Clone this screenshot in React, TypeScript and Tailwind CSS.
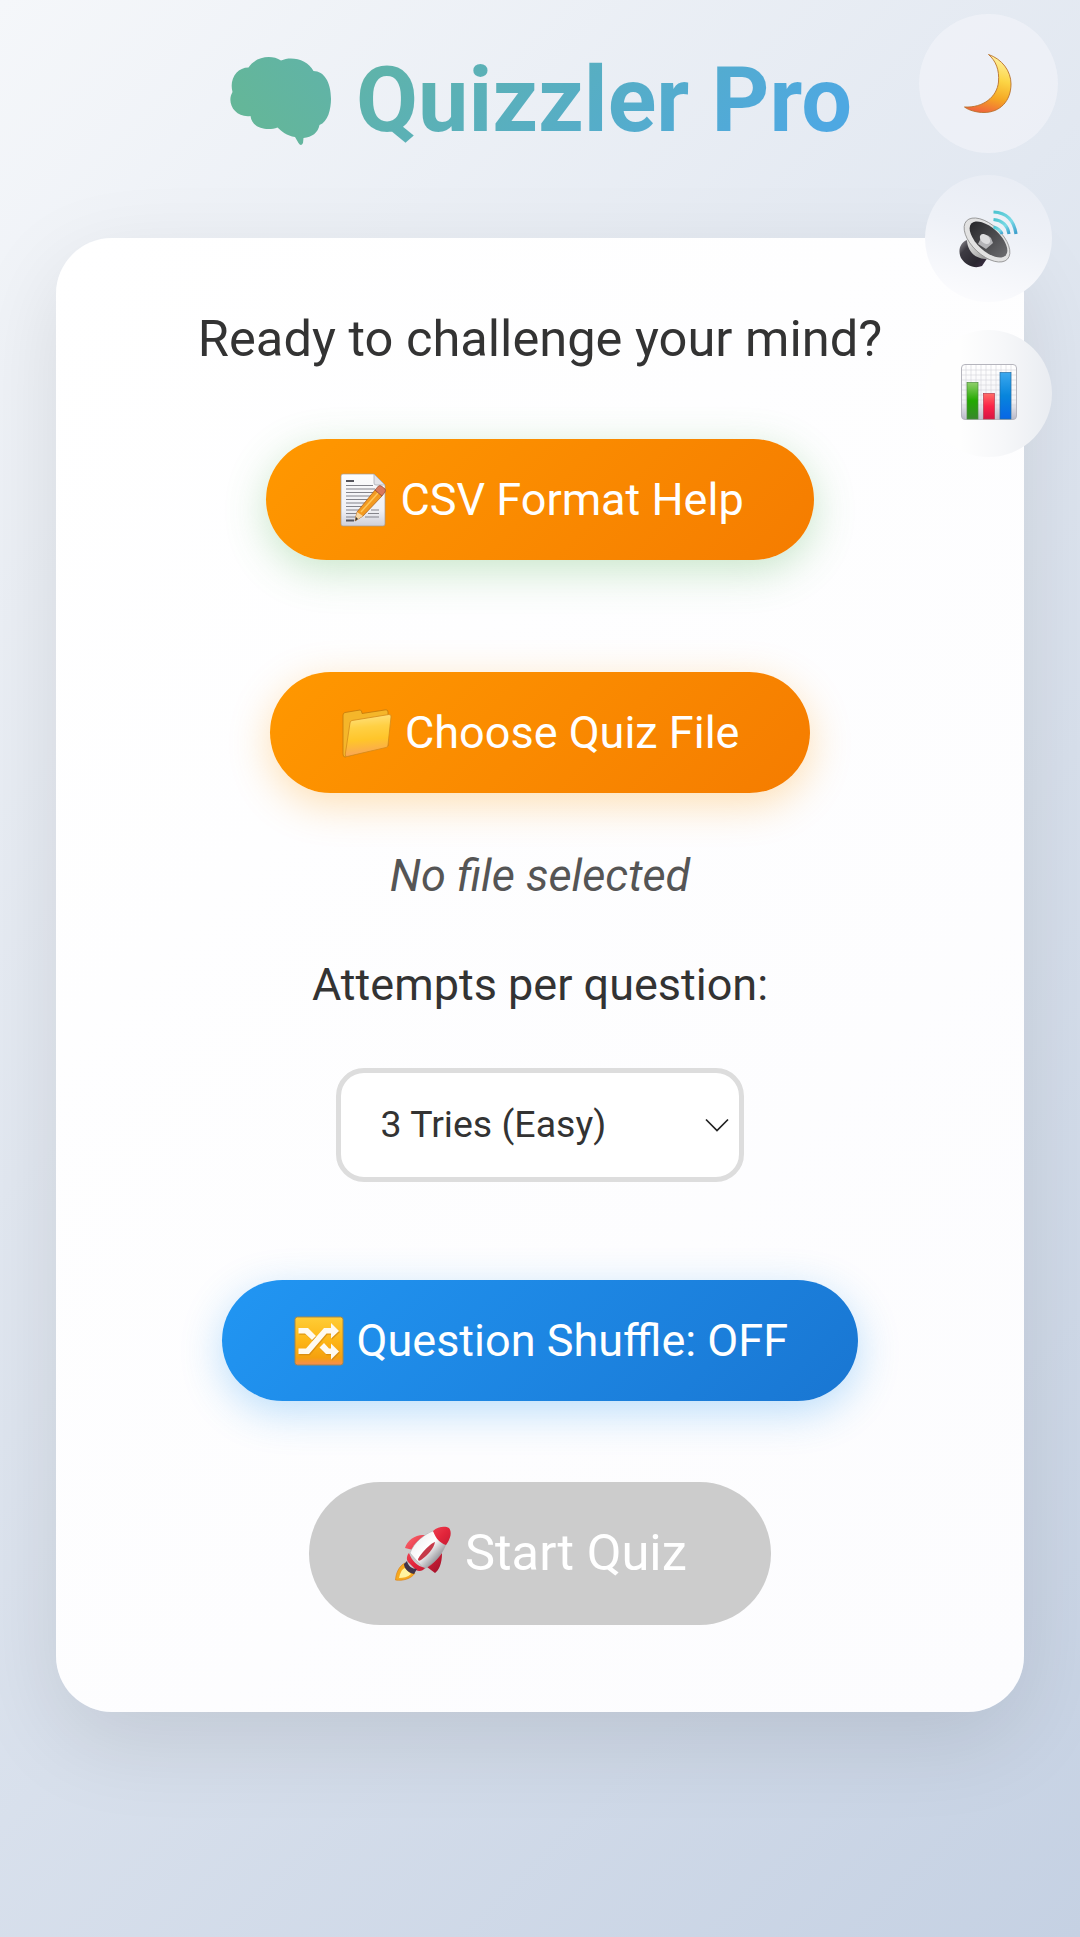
import React from 'react';

function Brain() {
  return (
    <svg className="h-[92px] w-[104px] shrink-0" viewBox="228 55 104 92">
      <defs>
        <linearGradient id="brain" gradientUnits="userSpaceOnUse" x1="235" y1="145" x2="345" y2="70">
          <stop stopColor="#65b795" />
          <stop offset="1" stopColor="#60b3a9" />
        </linearGradient>
      </defs>
      <path
        fill="url(#brain)"
        d="M248.500 67.500C255 57 271 54 281 60.500C292 55.500 308 60 313.500 71C324 71 331 82 331 99C331 109 328 122 319.500 125C318 133 312 137 303.500 138L303 143Q301 147 298.500 143L295 137C287 136 281 131 277.500 127.500C268 131 252 129 250.500 116C235 118 226 103 232.500 92C229 79 237 67.500 248.500 67.500Z"
      />
    </svg>
  );
}

function Moon() {
  return (
    <svg className="h-[64px] w-[52px]" viewBox="0 0 52 64">
      <defs>
        <linearGradient id="moon" x1=".6" y1="0" x2=".4" y2="1">
          <stop stopColor="#fff0a0" />
          <stop offset=".4" stopColor="#fcd545" />
          <stop offset=".72" stopColor="#f5a623" />
          <stop offset="1" stopColor="#f0663c" />
        </linearGradient>
      </defs>
      <path fill="url(#moon)" stroke="#b9702a" strokeWidth=".9" d="M25.500 2.500C39 7 48 19 48 32C48 49 37 60.500 21 60.500C14 60.500 6 58.500 1.500 55C20 56 34 45 35.500 30C36.500 18 33 9 25.500 2.500Z" />
    </svg>
  );
}

function Speaker() {
  return (
    <svg className="h-[64px] w-[64px]" viewBox="957 206 64 64">
      <defs>
        <linearGradient id="sp-base" x1="0" y1="0" x2="1" y2="1">
          <stop stopColor="#a09ea4" />
          <stop offset=".3" stopColor="#3d3b43" />
          <stop offset=".7" stopColor="#2b2831" />
          <stop offset="1" stopColor="#413049" />
        </linearGradient>
        <linearGradient id="sp-mid" x1="0" y1="0" x2="1" y2=".8">
          <stop stopColor="#fafafa" />
          <stop offset=".5" stopColor="#c4c4c4" />
          <stop offset="1" stopColor="#808080" />
        </linearGradient>
        <linearGradient id="sp-cone" x1="0" y1="0" x2="1" y2="0">
          <stop stopColor="#29292c" />
          <stop offset="1" stopColor="#6a6a6d" />
        </linearGradient>
        <linearGradient id="sp-wave" x1="0" y1="0" x2="1" y2="1">
          <stop stopColor="#4cc3cf" />
          <stop offset=".6" stopColor="#7adbe6" />
          <stop offset="1" stopColor="#3a9dcb" />
        </linearGradient>
      </defs>
      <path fill="url(#sp-base)" d="M967 239C959 242 958 251 961 257C966 265 975 268 982 265L988 256L972 237Z" />
      <path fill="url(#sp-mid)" d="M965 227L967 240C968 250 974 257 985 258L1000 260Z" />
      <ellipse cx="987" cy="239" rx="28" ry="15" transform="rotate(43 987 239)" fill="#e2e2e2" stroke="#8c8c8c" strokeWidth=".8" />
      <ellipse cx="988.500" cy="238.500" rx="23.500" ry="11.500" transform="rotate(43 988.500 238.500)" fill="url(#sp-cone)" />
      <path fill="#b4b4b7" d="M982 235Q987 232 991 237L993 242L986 248L978 243Z" />
      <ellipse cx="985" cy="238" rx="6" ry="4" transform="rotate(43 985 238)" fill="#dcdcde" />
      <g fill="none" stroke="url(#sp-wave)" strokeWidth="3.200">
        <path d="M993.500 226Q1000 228 1002 233" />
        <path d="M993.500 218.500Q1007 220 1009 233" />
        <path d="M993.500 211Q1013 212 1016 233" />
      </g>
    </svg>
  );
}

function Chart() {
  return (
    <svg className="mt-[-3px] h-[58px] w-[58px]" viewBox="0 0 58 58">
      <defs>
        <linearGradient id="ch-bg" x1="0" y1="0" x2="0" y2="1">
          <stop stopColor="#fff" />
          <stop offset=".65" stopColor="#f4f4f7" />
          <stop offset="1" stopColor="#b9b9c8" />
        </linearGradient>
        <linearGradient id="ch-g" x1="0" y1="0" x2="0" y2="1">
          <stop stopColor="#8fcf6a" />
          <stop offset=".5" stopColor="#22a900" />
          <stop offset="1" stopColor="#38872c" />
        </linearGradient>
        <linearGradient id="ch-r" x1="0" y1="0" x2="0" y2="1">
          <stop stopColor="#ff6b66" />
          <stop offset=".5" stopColor="#fb2448" />
          <stop offset="1" stopColor="#d81344" />
        </linearGradient>
        <linearGradient id="ch-b" x1="0" y1="0" x2="0" y2="1">
          <stop stopColor="#3ba8ee" />
          <stop offset=".5" stopColor="#0785dc" />
          <stop offset="1" stopColor="#0866e6" />
        </linearGradient>
      </defs>
      <rect x="1.500" y="1.500" width="55" height="55" rx="3.500" fill="url(#ch-bg)" stroke="#b5b5bd" />
      <path stroke="#d3d3da" strokeWidth=".6" d="M6 2V56M11 2V56M16 2V56M21 2V56M26 2V56M31 2V56M36 2V56M41 2V56M46 2V56M51 2V56M2 7H56M2 12H56M2 17H56M2 22H56M2 27H56M2 32H56M2 37H56M2 42H56M2 47H56" />
      <rect x="7" y="19.500" width="11" height="36.500" fill="url(#ch-g)" stroke="#4c8c3c" strokeWidth=".7" />
      <rect x="23.500" y="30.500" width="11" height="25.500" fill="url(#ch-r)" stroke="#b93a4c" strokeWidth=".7" />
      <rect x="40" y="9.500" width="11" height="46.500" fill="url(#ch-b)" stroke="#246da4" strokeWidth=".7" />
    </svg>
  );
}

function Memo() {
  return (
    <svg className="h-[54px] w-[46px] shrink-0" viewBox="0 0 46 54">
      <defs>
        <linearGradient id="memo" x1="0" y1="0" x2="0" y2="1">
          <stop stopColor="#fcfcfc" />
          <stop offset=".7" stopColor="#f0f0f4" />
          <stop offset="1" stopColor="#cfd0da" />
        </linearGradient>
      </defs>
      <path fill="url(#memo)" stroke="#a39c92" strokeWidth=".7" d="M3 1H34L45 12V51Q45 53 43 53H3Q1 53 1 51V3Q1 1 3 1Z" />
      <path fill="#e3e3e8" stroke="#a5a5aa" strokeWidth=".7" d="M34 1V10Q34 12 36 12H45Z" />
      <path stroke="#55555c" strokeWidth="2" d="M6 8H14M6 47.500H14" />
      <path stroke="#84848b" strokeWidth="1.200" d="M6 12.500H33M6 16H35M6 19.500H34M6 23H32M6 26.500H29M6 30H26M6 33.500H23M6 37H21M6 40.500H19M6 44H17M31 37H39M28 40.500H39M25 44H39" />
      <path fill="#f39a20" stroke="#a65a18" strokeWidth=".7" d="M17 39L35 17L42 23L23 43L15 48Z" />
      <path stroke="#ffc65a" strokeWidth="1.500" d="M21 39L38 20" />
      <path fill="#d9785c" stroke="#8f4631" strokeWidth=".7" d="M35 17L38.500 13Q40 12 42 13.500L45 16Q46 17 45 19L42 23Z" />
      <path fill="#f7d6a2" d="M17 39L23 43L15 48Z" />
      <path fill="#333" d="M16 44L18 46L15 48Z" />
    </svg>
  );
}

function Folder() {
  return (
    <svg className="mt-[2px] h-[50px] w-[50px] shrink-0" viewBox="0 0 50 50">
      <defs>
        <linearGradient id="fold" x1=".4" y1="0" x2=".5" y2="1">
          <stop stopColor="#ffe17e" />
          <stop offset=".3" stopColor="#ffd044" />
          <stop offset=".6" stopColor="#ffc52a" />
          <stop offset="1" stopColor="#f9a15c" />
        </linearGradient>
      </defs>
      <path fill="#f5b62a" stroke="#c1780c" strokeWidth=".8" d="M1 6Q1 4 3 3.500L18 1Q20 1 20 4.500L44 .800Q46 1 46 3V37L3 48Q1 48 1 45Z" />
      <path fill="url(#fold)" stroke="#d58a18" strokeWidth=".8" d="M8 14Q8 12 10 11.500L47 5.500Q49.500 5.500 49 8L46 36Q46 38 44 38.500L5 47.500Q3 48 3.300 45Z" />
    </svg>
  );
}

function ShuffleIcon() {
  return (
    <svg className="h-[50px] w-[50px] shrink-0" viewBox="0 0 50 50">
      <defs>
        <linearGradient id="shuf" x1="0" y1="0" x2="0" y2="1">
          <stop stopColor="#ffcd36" />
          <stop offset=".5" stopColor="#fdb515" />
          <stop offset=".85" stopColor="#f5a00e" />
          <stop offset="1" stopColor="#f78b54" />
        </linearGradient>
      </defs>
      <rect x="1" y="1" width="48" height="48" rx="2.500" fill="url(#shuf)" stroke="#a5874b" />
      <path fill="#c57c10" opacity=".55" transform="translate(.8 1.200)" d="M4.500 12H14L22 20L18 24L11 17.500H4.500ZM4.500 32.500H12L30 12H37V7L45 15L37 22.500V17.500H32.500L15 38H4.500ZM30 27L35 32.500H37V27.500L45 35.500L37 43.500V38H32L25.500 31.500Z" />
      <path fill="#fffaf0" d="M4.500 12H14L22 20L18 24L11 17.500H4.500ZM4.500 32.500H12L30 12H37V7L45 15L37 22.500V17.500H32.500L15 38H4.500ZM30 27L35 32.500H37V27.500L45 35.500L37 43.500V38H32L25.500 31.500Z" />
    </svg>
  );
}

function Rocket() {
  return (
    <svg className="h-[56px] w-[58px] shrink-0" viewBox="394 1525 58 56">
      <defs>
        <linearGradient id="rk-red" x1="0" y1="0" x2="1" y2="1">
          <stop stopColor="#fa6a70" />
          <stop offset=".5" stopColor="#e3253b" />
          <stop offset="1" stopColor="#9c1029" />
        </linearGradient>
        <linearGradient id="rk-body" x1=".2" y1=".2" x2=".8" y2=".8">
          <stop stopColor="#f2f2f2" />
          <stop offset=".45" stopColor="#fff" />
          <stop offset="1" stopColor="#85858b" />
        </linearGradient>
      </defs>
      <path fill="#f7a91e" stroke="#dc8218" strokeWidth=".7" d="M405 1562L415 1572C411 1578 403 1580 395.500 1579C396 1572 399 1565 405 1562Z" />
      <path fill="#fff3a0" d="M405 1567L411 1573C408 1576 403 1577 399 1577C400 1572 402 1568 405 1567Z" />
      <path fill="url(#rk-red)" d="M425 1534C416 1533 407 1539 405 1547L413 1549ZM442 1552C442 1563 439 1569 435 1572L427 1566Z" />
      <path fill="url(#rk-body)" stroke="#a4a4a8" strokeWidth=".5" d="M410 1552C414 1541 425 1533 433 1530L446 1543C442 1554 434 1563 424 1568Z" />
      <path fill="url(#rk-red)" d="M433 1530C438 1525 446 1525 449 1527C452 1531 451 1537 446 1544C440 1542 436 1538 433 1530ZM409 1552C412 1560 417 1565 425 1567C423 1570 419 1571 416 1569L408 1561C406 1558 407 1554 409 1552Z" />
      <path fill="#41334a" d="M407 1560C408 1565 412 1568 417 1568L414 1573C409 1572 404 1568 404 1563Z" />
      <path fill="#c63a49" d="M435 1541C431 1542 422 1551 418 1558Q418 1561 421 1559C428 1554 434 1547 435 1541Z" />
    </svg>
  );
}

export default function App() {
  return (
    <div className="relative flex h-[1937px] w-[1080px] flex-col items-center overflow-hidden bg-[linear-gradient(135deg,#f5f7fa_0%,#c5d1e3_100%)] font-['Roboto',sans-serif] text-[45px] text-[#333]">
      <header className="flex h-[238px] w-full shrink-0 items-start pt-[55px] pl-[228px]">
        <Brain />
        <h1 className="mt-[-7px] ml-[24px] bg-[linear-gradient(135deg,#60b4a6_0%,#4ea8e2_90%)] bg-clip-text text-[90px] leading-[106px] font-bold whitespace-nowrap text-transparent">
          Quizzler Pro
        </h1>
      </header>

      <main className="flex h-[1474px] w-[968px] shrink-0 flex-col items-center rounded-[56px] bg-[linear-gradient(135deg,#ffffff,#fcfcfe)] shadow-[0_28px_90px_rgba(0,0,0,0.1)]">
        <p className="mt-[71px] text-[50.625px] leading-[60px] whitespace-nowrap">Ready to challenge your mind?</p>
        <button className="mt-[70px] flex h-[121px] w-[548px] shrink-0 items-center rounded-full bg-[linear-gradient(135deg,#ff9800,#f57c00)] pl-[74px] whitespace-nowrap text-white shadow-[0_11px_42px_rgba(76,175,80,0.3)]">
          <Memo />
          <span className="ml-[14.500px]">CSV Format Help</span>
        </button>
        <button className="mt-[112px] flex h-[121px] w-[540px] shrink-0 items-center rounded-full bg-[linear-gradient(135deg,#ff9800,#f57c00)] pl-[72px] whitespace-nowrap text-white shadow-[0_11px_42px_rgba(255,152,0,0.3)]">
          <Folder />
          <span className="ml-[13px]">Choose Quiz File</span>
        </button>
        <p className="mt-[56px] leading-[54px] whitespace-nowrap text-[#555] italic">No file selected</p>
        <p className="mt-[55px] leading-[54px] whitespace-nowrap">Attempts per question:</p>
        <div className="mt-[56px] flex h-[114px] w-[408px] shrink-0 items-center justify-between rounded-[28px] border-[5px] border-[#ddd] bg-white pr-[10px] pl-[39.500px] text-[37.500px] whitespace-nowrap">
          <span className="mt-[-2px]">3 Tries (Easy)</span>
          <svg className="h-[14px] w-[24px]" viewBox="0 0 24 14" fill="none" stroke="#222" strokeWidth="1.700">
            <path d="M1 1.500L12 12.500L23 1.500" />
          </svg>
        </div>
        <button className="mt-[98px] flex h-[121px] w-[636px] shrink-0 items-center rounded-full bg-[linear-gradient(135deg,#2196f3,#1976d2)] pl-[72px] whitespace-nowrap text-white shadow-[0_11px_42px_rgba(33,150,243,0.3)]">
          <ShuffleIcon />
          <span className="ml-[12.500px]">Question Shuffle: OFF</span>
        </button>
        <button className="mt-[81px] flex h-[143px] w-[462px] shrink-0 items-center rounded-full bg-[#ccc] pl-[85px] text-[50.625px] whitespace-nowrap text-white">
          <Rocket />
          <span className="mt-[-2px] ml-[13px]">Start Quiz</span>
        </button>
      </main>

      <nav className="absolute top-[14px] left-[919px] flex w-[139px] flex-col items-center">
        <button className="flex h-[139px] w-[139px] items-center justify-center rounded-full bg-[#f8f9fc]/45">
          <Moon />
        </button>
        <button className="mt-[22px] flex h-[127px] w-[127px] items-center justify-center rounded-full bg-[linear-gradient(195deg,#e8ecf4_0%,#eef1f7_45%,#fcfcfe_95%)]">
          <Speaker />
        </button>
        <button className="mt-[28px] flex h-[127px] w-[127px] items-center justify-center rounded-full bg-[linear-gradient(90deg,#fefefe_28%,#f6f7f9_62%,#e9ecf1_100%)]">
          <Chart />
        </button>
      </nav>
    </div>
  );
}
